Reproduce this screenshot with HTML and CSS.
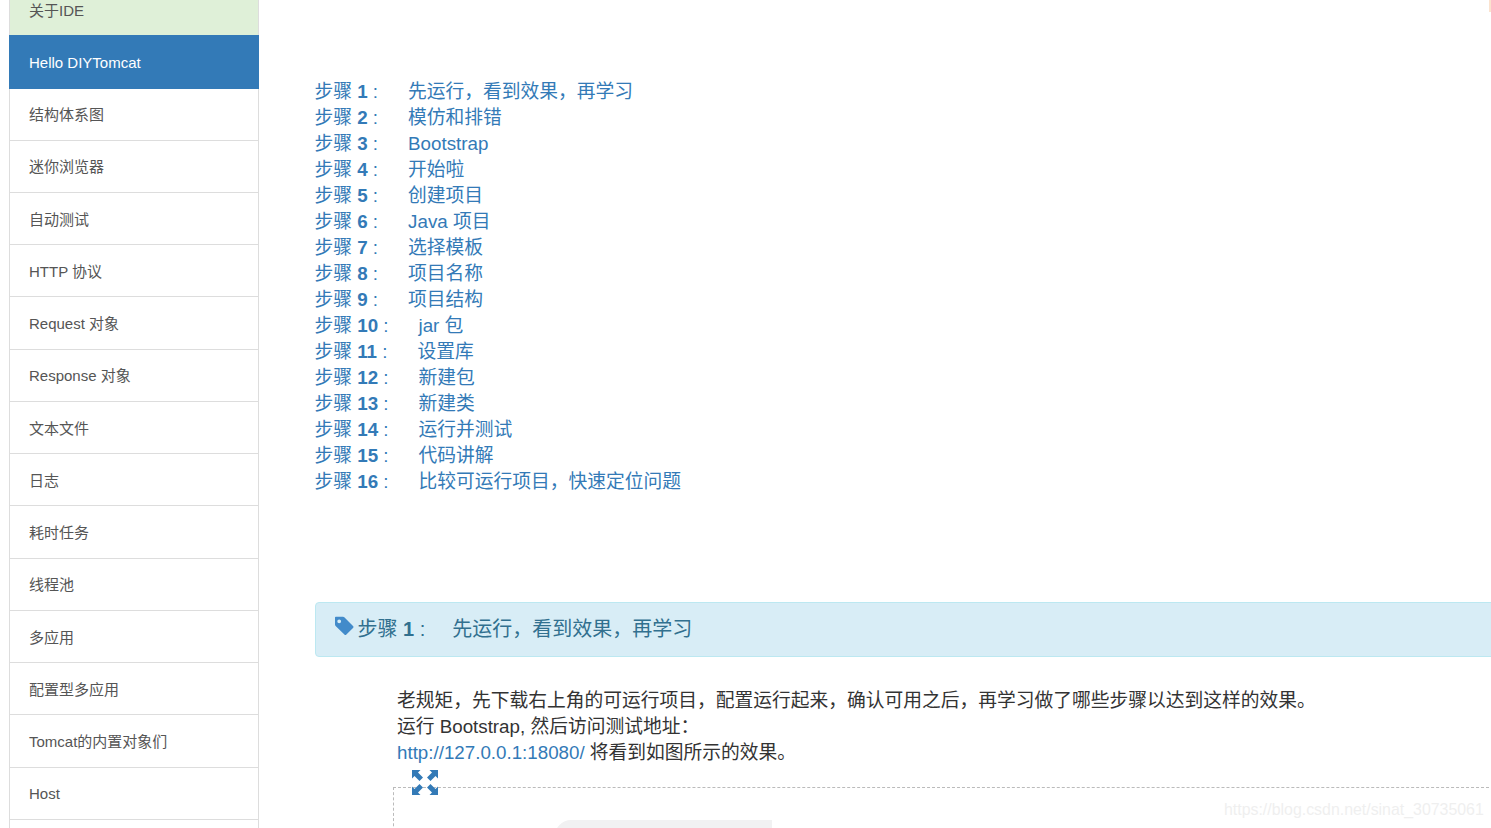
FILE: index.html
```html
<!DOCTYPE html>
<html lang="zh-CN">
<head>
<meta charset="utf-8">
<title>Hello DIYTomcat</title>
<link rel="stylesheet" href="styles.css">
</head>
<body>
<div class="page">
  <nav class="side">
    <a class="item item-green">关于IDE</a>
    <a class="item item-active">Hello DIYTomcat</a>
    <a class="item">结构体系图</a>
    <a class="item">迷你浏览器</a>
    <a class="item">自动测试</a>
    <a class="item">HTTP 协议</a>
    <a class="item">Request 对象</a>
    <a class="item">Response 对象</a>
    <a class="item">文本文件</a>
    <a class="item">日志</a>
    <a class="item">耗时任务</a>
    <a class="item">线程池</a>
    <a class="item">多应用</a>
    <a class="item">配置型多应用</a>
    <a class="item">Tomcat的内置对象们</a>
    <a class="item">Host</a>
    <a class="item"></a>
  </nav>
  <main class="main">
    <ul class="steps">
      <li><span class="label">步骤 <b>1</b> :</span><span class="title">先运行，看到效果，再学习</span></li>
      <li><span class="label">步骤 <b>2</b> :</span><span class="title">模仿和排错</span></li>
      <li><span class="label">步骤 <b>3</b> :</span><span class="title">Bootstrap</span></li>
      <li><span class="label">步骤 <b>4</b> :</span><span class="title">开始啦</span></li>
      <li><span class="label">步骤 <b>5</b> :</span><span class="title">创建项目</span></li>
      <li><span class="label">步骤 <b>6</b> :</span><span class="title">Java 项目</span></li>
      <li><span class="label">步骤 <b>7</b> :</span><span class="title">选择模板</span></li>
      <li><span class="label">步骤 <b>8</b> :</span><span class="title">项目名称</span></li>
      <li><span class="label">步骤 <b>9</b> :</span><span class="title">项目结构</span></li>
      <li><span class="label">步骤 <b>10</b> :</span><span class="title">jar 包</span></li>
      <li><span class="label">步骤 <b>11</b> :</span><span class="title">设置库</span></li>
      <li><span class="label">步骤 <b>12</b> :</span><span class="title">新建包</span></li>
      <li><span class="label">步骤 <b>13</b> :</span><span class="title">新建类</span></li>
      <li><span class="label">步骤 <b>14</b> :</span><span class="title">运行并测试</span></li>
      <li><span class="label">步骤 <b>15</b> :</span><span class="title">代码讲解</span></li>
      <li><span class="label">步骤 <b>16</b> :</span><span class="title">比较可运行项目，快速定位问题</span></li>
    </ul>
    <div class="panel">
      <svg class="tag" viewBox="0 0 20 20" aria-hidden="true"><path fill-rule="evenodd" d="M1 1.5A.8.8 0 0 1 1.8.7H9a2 2 0 0 1 1.3.6l8.7 8.7a1.4 1.4 0 0 1 0 2l-6.6 6.6a1.4 1.4 0 0 1-2 0L1.6 9.9A2.2 2.2 0 0 1 1 8.6ZM5.2 3.4a1.9 1.9 0 1 0 0 3.8a1.9 1.9 0 0 0 0-3.8Z"/></svg>
      <span class="label">步骤 <b>1</b> :</span><span class="title">先运行，看到效果，再学习</span>
    </div>
    <div class="body">
      <p class="text">老规矩，先下载右上角的可运行项目，配置运行起来，确认可用之后，再学习做了哪些步骤以达到这样的效果。</p>
      <p class="text">运行 Bootstrap, 然后访问测试地址：</p>
      <p class="text"><a class="link">http://127.0.0.1:18080/</a> 将看到如图所示的效果。</p>
      <svg class="expand" viewBox="0 0 26 25" aria-hidden="true">
        <path d="M0 0H8.5L6 2.5L11 7.5L7.5 11L2.5 6L0 8.5Z"/>
        <path d="M26 0H17.5L20 2.5L15 7.5L18.5 11L23.5 6L26 8.5Z"/>
        <path d="M0 25H8.5L6 22.5L11 17.5L7.5 14L2.5 19L0 16.5Z"/>
        <path d="M26 25H17.5L20 22.5L15 17.5L18.5 14L23.5 19L26 16.5Z"/>
      </svg>
      <div class="shot"><div class="shot-inner"></div></div>
    </div>
  </main>
</div>
<div class="watermark">https://blog.csdn.net/sinat_30735061</div>
<div class="corner"></div>
</body>
</html>
```
FILE: styles.css
```css
html, body {
  margin: 0;
  height: 828px;
  overflow: hidden;
  background: #fff;
}
body {
  position: relative;
  font-family: "Liberation Sans", "Noto Sans CJK SC", sans-serif;
  font-size: 18.75px;
  line-height: 26px;
  color: #333;
}
.page {
  display: flex;
  height: 828px;
  overflow: hidden;
}
.side {
  flex: none;
  width: 250px;
  margin: -17.25px 0 0 9px;
  display: flex;
  flex-direction: column;
}
.item {
  flex: none;
  box-sizing: border-box;
  height: 53.25px;
  margin-bottom: -1px;
  padding: 0.75px 0 0 19px;
  border: 1px solid #ddd;
  font-size: 15px;
  line-height: 52.5px;
  color: #555;
}
.item-green {
  background: #dff0d8;
  border-color: #dff0d8 #ddd;
}
.item-active {
  position: relative;
  height: 54.25px;
  margin-bottom: -2px;
  background: #337ab7;
  border-color: #337ab7;
  color: #fff;
}
.main {
  flex: 1;
  min-width: 0;
  padding: 79px 0 0 55.5px;
}
.steps {
  list-style: none;
  margin: 0;
  padding: 0;
  color: #337ab7;
}
.label {
  margin-right: 30px;
}
.panel {
  box-sizing: border-box;
  height: 55px;
  margin: 107px -20px 0 0;
  padding: 13px 0 0 18px;
  display: flex;
  align-items: flex-start;
  font-size: 20px;
  background: #d8edf6;
  border: 1px solid #bce8f1;
  border-radius: 4px;
  color: #31708f;
}
.panel .label {
  margin-right: 27px;
}
.tag {
  flex: none;
  width: 20px;
  height: 20px;
  margin: 0 4px 0 0;
  fill: #428bca;
}
.body {
  padding: 31px 0 0 82.5px;
  position: relative;
}
.text {
  margin: 0;
}
.link {
  color: #337ab7;
}
.expand {
  position: absolute;
  left: 97px;
  top: 113px;
  width: 26px;
  height: 25px;
  fill: #337ab7;
  z-index: 1;
}
.shot {
  margin: 21px -3px 0 -4.5px;
  height: 60px;
  border: 1px dashed #bbb;
  box-sizing: border-box;
  padding: 32px 0 0 161px;
}
.shot-inner {
  width: 217px;
  height: 40px;
  background: #f1f1f2;
  border-radius: 16px 0 0 0;
}
.watermark {
  position: absolute;
  left: 1224px;
  top: 798px;
  font-size: 15.9px;
  line-height: 24px;
  color: #efefef;
  white-space: nowrap;
}
.corner {
  position: absolute;
  left: 1489px;
  top: 0;
  width: 2px;
  height: 12px;
  background: #fbe3cf;
}
```
